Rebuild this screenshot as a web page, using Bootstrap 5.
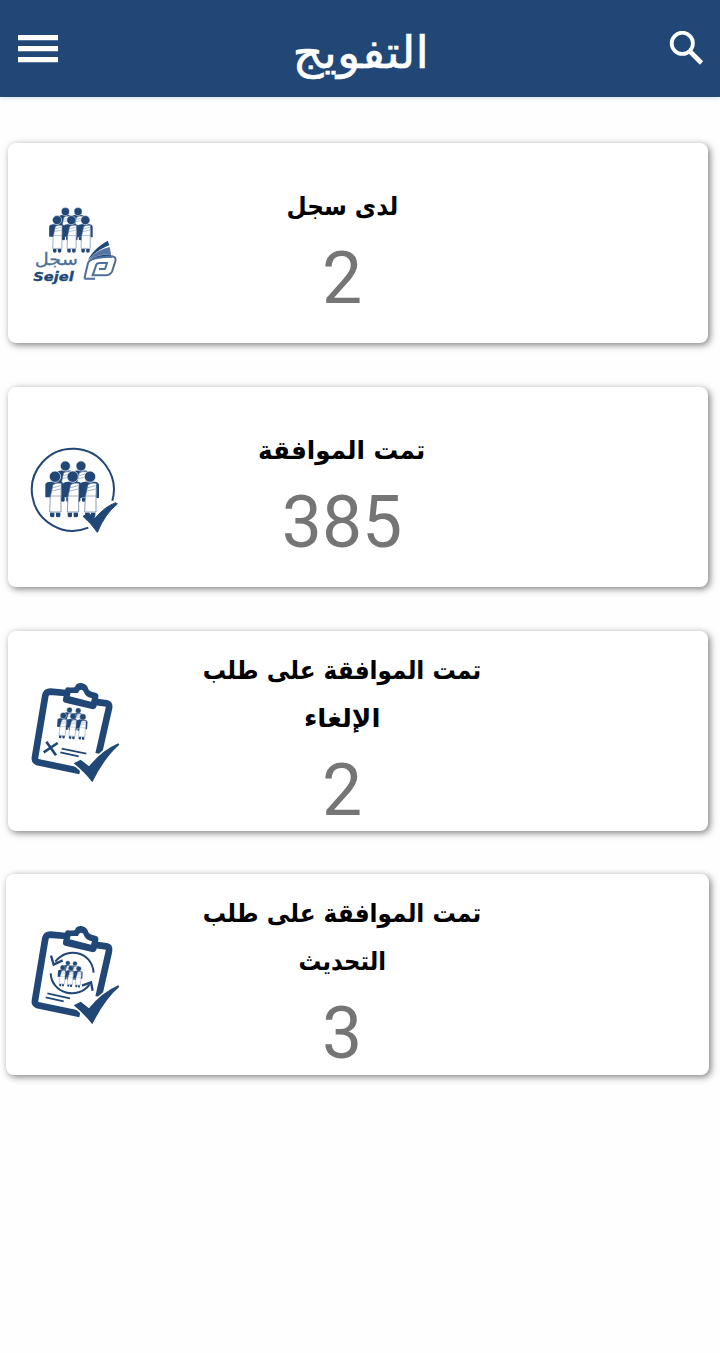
<!DOCTYPE html>
<html lang="ar">
<head>
<meta charset="utf-8">
<meta name="viewport" content="width=device-width, initial-scale=1">
<title>التفويج</title>
<link href="https://cdn.jsdelivr.net/npm/bootstrap@5.3.0/dist/css/bootstrap.min.css" rel="stylesheet">
<style>
:root{--navy:#214777}
body{background:#fefefe;font-family:"DejaVu Sans",sans-serif;color:#000}
.topbar{height:97px;background:var(--navy);box-shadow:0 2px 3px #dfe7f2;padding:0 16px 0 18px}
.topbar h1{font-size:45px;line-height:60px;font-weight:400;padding-top:8px;margin-right:5px;transform:scaleX(1.07);-webkit-text-stroke:.6px #fff}
.tiles{padding:46px 12px 40px 8px;gap:44px}
.tile{height:200px;border:0;border-radius:8px;box-shadow:2px 2px 7px rgba(0,0,0,.5);padding-left:12px;background:#fff}
.tile.wide{margin:-1px -1px 0 -2px;height:201px;padding-left:14px}
.pic{width:110px;height:115px;flex:none}
.info{width:310px;margin-left:57px;padding-top:23px}
.caption-ar{font-size:25.5px;line-height:48px;font-weight:700}
.caption-ar span{display:inline-block;white-space:nowrap;transform:scaleX(.91)}
.caption-ar .w-mid{transform:scaleX(.965)}
.caption-ar .w-full{transform:scaleX(1.03)}
.caption-ar .w-slim{transform:scaleX(.89)}
.count{font-family:Roboto,sans-serif;font-size:71.5px;line-height:98px;color:#757575}
</style>
</head>
<body class="min-vh-100">
<svg width="0" height="0" class="position-absolute" aria-hidden="true">
<defs>
<g id="person">
<path d="M-29 22Q-25 15 -14 15H14Q26 16 27 25V64H19V34L-12 62H-29Z" fill="#214777"/>
<path d="M-14 60 -6 24Q3 17 19 20L18 60V106H-16Z" fill="#fff" stroke="#4d6c94" stroke-width="2"/>
<path d="M-6 33 16 27M-9 43 17 37M-14 58H18" stroke="#7089aa" stroke-width="2" fill="none"/>
<path d="M-15 108H-2V118Q-2 122-8 122T-15 118ZM3 108H16V118Q16 122 9 122T3 118Z" fill="#214777"/>
<circle r="17" fill="#214777" stroke="#fff" stroke-width="2"/>
</g>
<g id="crowd">
<g transform="translate(136 91) scale(.88)"><use href="#person"/></g>
<g transform="translate(183 91) scale(.88)"><use href="#person"/></g>
<use href="#person" x="105" y="123"/><use href="#person" x="158" y="123"/><use href="#person" x="210" y="123"/>
</g>
<g id="board">
<path d="M137 53 91 49Q79 49 76 60L45 246Q43 257 54 261L180 287M222 79 259 84Q269 86 267 98L236 235" fill="none" stroke="#214777" stroke-width="20" stroke-linejoin="round"/>
<path fill-rule="evenodd" d="M143 36Q157 38 165 35C168 17 201 19 205 42Q210 50 229 53Q237 57 235 66L229 95Q226 103 216 101L135 82Q127 79 129 71L135 43Q137 36 143 36ZM152 53 149 63 213 79 216 69Q199 66 193 53Q190 43 183 43Q176 44 174 53Z" fill="#214777"/>
</g>
<path id="tick" d="M161 264 182 253 207 273Q246 225 295 204L298 208Q253 247 217 321Q194 291 161 264Z" fill="#214777" stroke="#fff" stroke-width="10" paint-order="stroke"/>
</defs>
</svg>

<header class="topbar d-flex align-items-center justify-content-between text-white">
<svg width="40" height="28" viewBox="0 0 40 28" fill="#fff"><path d="M0 0H40V5.2H0ZM0 11H40V16.2H0ZM0 22H40V27.2H0Z"/></svg>
<h1 class="mb-0" dir="rtl">التفويج</h1>
<svg width="35" height="35" viewBox="0 1 35 35" fill="none" stroke="#fff" stroke-width="3.8"><circle cx="13.3" cy="13.3" r="10.6"/><path d="m21 21.5 11.5 11.5" stroke-width="4.6"/></svg>
</header>

<main class="tiles d-flex flex-column">
<section class="tile card flex-row align-items-center">
<svg class="pic" viewBox="0 -28 330 345">
<use href="#crowd" transform="translate(26 -24) scale(.81 .8)"/>
<path d="M204 194Q220 160 263 136L268 150Q231 164 204 194Z" fill="#214777"/>
<path d="M204 194Q229 165 269 155L273 177Q237 175 204 194Z" fill="#5375a2"/>
<path d="M205 196Q231 177 272 177L277 187Q229 184 205 196Z" fill="#214777"/>
<path d="M193 250 204 203Q209 190 236 187L276 183Q290 185 286 198L276 229Q271 240 255 240H218L229 208Q231 203 240 203H261L255 221H237M193 250H225" fill="none" stroke="#4d6f9c" stroke-width="6"/>
<text x="109" y="209" text-anchor="middle" direction="rtl" font-family="DejaVu Sans" font-size="50" textLength="130" lengthAdjust="spacingAndGlyphs" fill="#4d6f9c" stroke="#4d6f9c" stroke-width=".8">سجل</text>
<text x="40" y="256" font-family="DejaVu Sans" font-weight="700" font-style="italic" font-size="37" textLength="121" lengthAdjust="spacingAndGlyphs" fill="#214777" stroke="#214777" stroke-width="1">Sejel</text>
</svg>
<div class="info text-center"><div class="caption-ar" dir="rtl"><span>لدى سجل</span></div><div class="count">2</div></div>
</section>

<section class="tile card flex-row align-items-center">
<svg class="pic" viewBox="0 -17 330 345">
<path d="M205 276A123 123 0 1 1 277 195" fill="none" stroke="#214777" stroke-width="6"/>
<use href="#crowd"/>
<path d="M189 242 206 233 225 248Q256 211 288 201L292 205Q255 234 232 290Q214 263 189 242Z" fill="#214777" stroke="#214777" stroke-width="3"/>
</svg>
<div class="info text-center"><div class="caption-ar" dir="rtl"><span class="w-mid">تمت الموافقة</span></div><div class="count">385</div></div>
</section>

<section class="tile card flex-row align-items-center">
<svg class="pic" viewBox="0 -4 330 345">
<use href="#board"/>
<use href="#crowd" transform="translate(76 48) rotate(4) scale(.56)"/>
<path d="m79 199 29 41m5-37-42 28" stroke="#214777" stroke-width="8"/>
<path d="m125 220 74 15m-78-4 55 12" stroke="#214777" stroke-width="5"/>
<use href="#tick"/>
</svg>
<div class="info text-center"><div class="caption-ar" dir="rtl"><span>تمت الموافقة على طلب</span><br><span class="w-full">الإلغاء</span></div><div class="count">2</div></div>
</section>

<section class="tile wide card flex-row align-items-center">
<svg class="pic" viewBox="0 -4 330 345">
<use href="#board"/>
<use href="#crowd" transform="translate(84 88) rotate(4) scale(.46)"/>
<path d="M221 163C216 100 143 83 106 130M92 165C95 225 173 247 209 198" fill="none" stroke="#214777" stroke-width="6"/>
<path d="M93 112 101 139 128 126M186 202 213 192 218 217" fill="none" stroke="#214777" stroke-width="7"/>
<path d="m82 225 68 15m-73-3 54 12" stroke="#214777" stroke-width="5"/>
<use href="#tick" y="-3"/>
</svg>
<div class="info text-center"><div class="caption-ar" dir="rtl"><span>تمت الموافقة على طلب</span><br><span class="w-slim">التحديث</span></div><div class="count">3</div></div>
</section>
</main>
<script src="https://cdn.jsdelivr.net/npm/bootstrap@5.3.0/dist/js/bootstrap.bundle.min.js"></script>
</body>
</html>
